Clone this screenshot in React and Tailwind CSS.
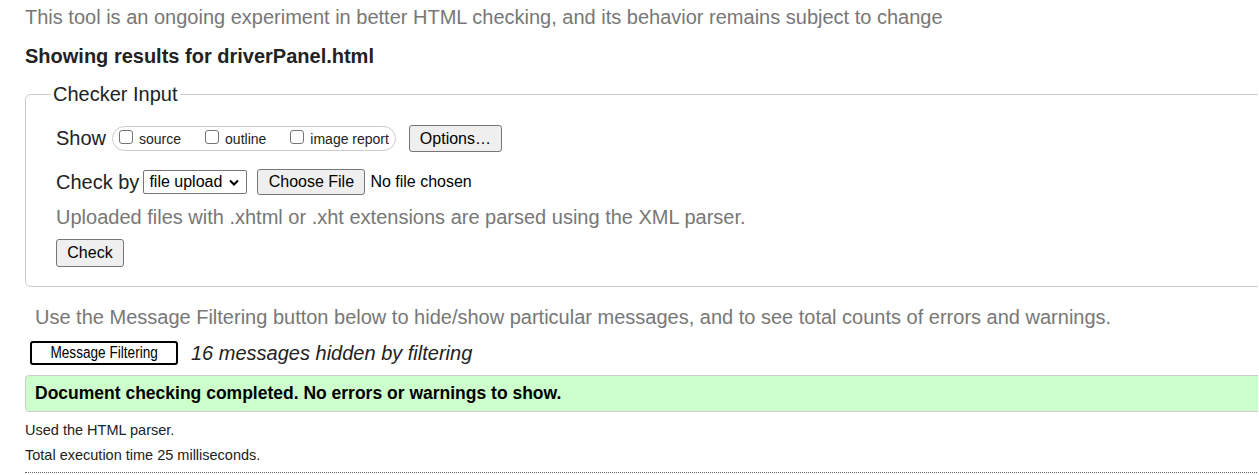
const Checkbox = ({ label, last }) => (
    <div className={`flex items-center ${last ? "" : "mr-[24px]"}`}>
        <span className="-mt-[4px] w-[14px] h-[14px] border border-[#767676] rounded-[3px] bg-white" />
        <span className="ml-[6px] text-[14px] leading-[16px] text-[#222]">{label}</span>
    </div>
);

const NativeButton = ({ children, className }) => (
    <button
        className={`bg-[#efefef] border border-[#767676] rounded-[3px] text-[16px] leading-[18px] text-black flex items-center justify-center ${className}`}
    >
        {children}
    </button>
);

const App = () => {
    return (
        <div className="w-[1258px] h-[475px] overflow-hidden bg-white font-['Liberation_Sans',Arial,sans-serif] text-[#222]">
            <div className="w-[1300px] pl-[25px]">
                <p className="mt-[6px] text-[20px] leading-[23px] text-[#777]">
                    This tool is an ongoing experiment in better HTML checking, and its behavior remains subject to change
                </p>
                <h2 className="mt-[16px] text-[20px] leading-[23px] font-bold">
                    Showing results for driverPanel.html
                </h2>

                <fieldset className="mt-[15px] w-[1260px] border border-[#ccc] rounded-[6px] pb-[19px]">
                    <legend className="ml-[25px] px-[2px] text-[20px] leading-[23px]">Checker Input</legend>

                    <div className="pl-[30px]">
                        <div className="mt-[19px] h-[27px] flex items-center">
                            <span className="text-[20px] leading-[23px]">Show</span>
                            <div className="ml-[6px] h-[25px] flex items-center border border-[#ccc] rounded-full pl-[6px] pr-[6px]">
                                <Checkbox label="source" />
                                <Checkbox label="outline" />
                                <Checkbox label="image report" last />
                            </div>
                            <NativeButton className="ml-[13px] w-[93px] h-[27px]">Options…</NativeButton>
                        </div>

                        <div className="mt-[17px] h-[26px] flex items-center">
                            <span className="text-[20px] leading-[23px]">Check by</span>
                            <div className="ml-[4px] w-[104px] h-[24px] border border-[#767676] rounded-[2px] flex items-center pl-[5px] pr-[7px] justify-between">
                                <span className="text-[16px] leading-[18px] text-black">file upload</span>
                                <svg width="10" height="7" viewBox="0 0 10 7" fill="none">
                                    <path d="M1 1.5 L5 5.5 L9 1.5" stroke="#000" strokeWidth="2" />
                                </svg>
                            </div>
                            <NativeButton className="ml-[10px] w-[108px] h-[26px]">Choose File</NativeButton>
                            <span className="ml-[5px] text-[16px] leading-[18px] text-black">No file chosen</span>
                        </div>

                        <p className="mt-[11px] text-[20px] leading-[23px] text-[#777]">
                            Uploaded files with .xhtml or .xht extensions are parsed using the XML parser.
                        </p>

                        <NativeButton className="mt-[10px] w-[68px] h-[28px]">Check</NativeButton>
                    </div>
                </fieldset>

                <p className="mt-[19px] ml-[10px] text-[20px] leading-[23px] text-[#777]">
                    Use the Message Filtering button below to hide/show particular messages, and to see total counts of errors and warnings.
                </p>

                <div className="mt-[12px] ml-[5px] h-[24px] flex items-center">
                    <button className="w-[148px] h-[24px] border-2 border-black rounded-[3px] bg-white text-black flex items-center justify-center">
                        <span className="inline-block text-[16px] leading-[18px] scale-x-[0.85] whitespace-nowrap">
                            Message Filtering
                        </span>
                    </button>
                    <span className="ml-[13px] text-[20px] leading-[23px] italic text-[#222]">
                        16 messages hidden by filtering
                    </span>
                </div>

                <div className="mt-[10px] w-[1260px] h-[37px] bg-[#ccffcc] border border-[#ccc] rounded-[4px] flex items-center pl-[9px] pb-[1px]">
                    <span className="text-[17.5px] leading-[20px] font-bold text-black">
                        Document checking completed. No errors or warnings to show.
                    </span>
                </div>

                <p className="mt-[10px] text-[14.5px] leading-[17px] text-[#222]">Used the HTML parser.</p>
                <p className="mt-[8px] text-[14.5px] leading-[17px] text-[#222]">Total execution time 25 milliseconds.</p>
                <div className="mt-[8px] w-[1260px] border-t border-dotted border-[#666]" />
            </div>
        </div>
    );
};

export default App;
